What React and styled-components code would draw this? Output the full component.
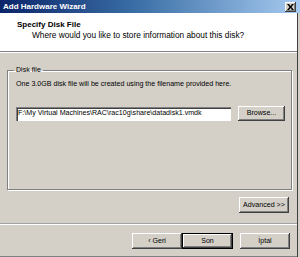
import React from "react";
import styled, { createGlobalStyle, css } from "styled-components";

const Global = createGlobalStyle`
  html, body {
    margin: 0;
    padding: 0;
    background: #d4d0c8;
  }
  * { box-sizing: border-box; }
`;

export default function App() {
  return (
    <>
      <Global />
      <Window>
        <TitleBar>
          <span>Add Hardware Wizard</span>
          <CloseButton>
            <svg width="7" height="6" viewBox="0 0 7 6">
              <path d="M0 0h2l1.5 2L5 0h2L4.5 3 7 6H5L3.5 4 2 6H0l2.5-3z" fill="#000" />
            </svg>
          </CloseButton>
        </TitleBar>
        <Frame>
          <Header>
            <h1>Specify Disk File</h1>
            <p>Where would you like to store information about this disk?</p>
          </Header>
          <Content>
            <GroupBox>
              <legend>Disk file</legend>
              <Note>One 3.0GB disk file will be created using the filename provided here.</Note>
              <FileRow>
                <PathInput>F:\My Virtual Machines\RAC\rac10g\share\datadisk1.vmdk</PathInput>
                <Button $w={47}>Browse...</Button>
              </FileRow>
            </GroupBox>
            <AdvancedRow>
              <Button $w={50}>Advanced &gt;&gt;</Button>
            </AdvancedRow>
          </Content>
          <Footer>
            <Button $w={50}>&lsaquo; Geri</Button>
            <Button $w={51} $default>Son</Button>
            <Gap />
            <Button $w={50}>İptal</Button>
          </Footer>
        </Frame>
      </Window>
    </>
  );
}

const Window = styled.div`
  width: 300px;
  height: 257px;
  display: flex;
  flex-direction: column;
  background: #d4d0c8;
  font-family: "Liberation Sans", Arial, sans-serif;
  font-size: 7.1px;
  color: #000;
  overflow: hidden;
`;

const TitleBar = styled.div`
  height: 13px;
  flex: none;
  display: flex;
  align-items: center;
  padding: 0 4px 0 3px;
  background: linear-gradient(to right, #0a246a 0%, #3a6ea5 45%, #a6caf0 100%);
  color: #fff;
  font-weight: bold;
  font-size: 8px;
  span {
    flex: 1;
  }
`;

const CloseButton = styled.div`
  flex: none;
  width: 11px;
  height: 10px;
  display: flex;
  align-items: center;
  justify-content: center;
  background: #d4d0c8;
  box-shadow: inset -1px -1px #404040, inset 1px 1px #fff, inset -2px -2px #808080;
`;

const Frame = styled.div`
  flex: 1;
  display: flex;
  flex-direction: column;
  box-shadow: inset -2px 0 #d4d0c8, inset -3px 0 #404040, inset 0 -1px #808080;
`;

const Header = styled.div`
  height: 39px;
  flex: none;
  background: #fff;
  margin-right: 3px;
  padding: 7px 0 0 17px;
  border-bottom: 1px solid #808080;
  box-shadow: 0 1px #fff;
  h1 {
    margin: 0;
    font-size: 8px;
    font-weight: bold;
    line-height: 9px;
  }
  p {
    margin: 2px 0 0 15px;
    font-size: 8.3px;
    line-height: 9px;
  }
`;

const Content = styled.div`
  height: 172px;
  flex: none;
  padding: 14px 8px 0 7px;
  border-bottom: 1px solid #a0a0a0;
  box-shadow: 0 1px #fff;
  margin-right: 3px;
`;

const GroupBox = styled.fieldset`
  margin: 0;
  height: 124px;
  padding: 6px 6px 0 8px;
  border: 1px solid #808080;
  box-shadow: inset 1px 1px #fff, 1px 1px #fff;
  legend {
    padding: 0 2px;
    margin-left: -2px;
    line-height: 8px;
  }
`;

const Note = styled.div`
  line-height: 9px;
`;

const FileRow = styled.div`
  display: flex;
  align-items: center;
  gap: 7px;
  margin-top: 17px;
`;

const PathInput = styled.div`
  width: 215px;
  height: 14px;
  background: #fff;
  padding: 2px 0 0 2px;
  line-height: 9px;
  white-space: nowrap;
  overflow: hidden;
  box-shadow: inset 1px 1px #808080, inset 2px 2px #404040, inset -1px -1px #fff;
`;

const Button = styled.div`
  width: ${(p) => p.$w}px;
  height: 15px;
  display: flex;
  align-items: center;
  justify-content: center;
  background: #d4d0c8;
  line-height: 9px;
  white-space: nowrap;
  box-shadow: inset -1px -1px #404040, inset 1px 1px #fff, inset -2px -2px #808080;
  ${(p) =>
    p.$default &&
    css`
      box-shadow: inset 0 0 0 1px #000, inset -2px -2px #404040, inset 2px 2px #fff,
        inset -3px -3px #808080;
    `}
`;

const AdvancedRow = styled.div`
  display: flex;
  justify-content: flex-end;
  margin-top: 7px;
  ${Button} {
    height: 16px;
  }
`;

const Footer = styled.div`
  display: flex;
  align-items: center;
  justify-content: flex-end;
  padding: 9px 7px 0 0;
  margin-right: 3px;
  ${Button} {
    height: 16px;
  }
`;

const Gap = styled.div`
  width: 7px;
`;
